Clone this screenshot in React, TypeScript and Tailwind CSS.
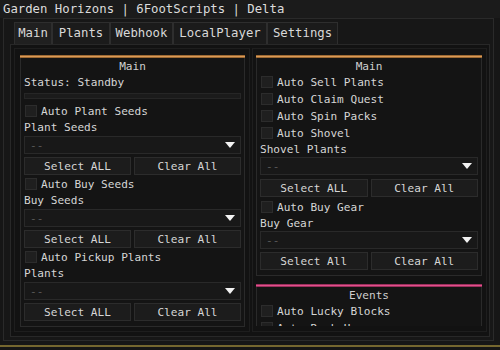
import React from "react";

const tabs = [
  { name: "Main", w: "w-[38px]" },
  { name: "Plants", w: "w-[58px]" },
  { name: "Webhook", w: "w-[63px]" },
  { name: "LocalPlayer", w: "w-[94px]" },
  { name: "Settings", w: "w-[71px]" },
];

function Check({ label, tall = false }: { label: string; tall?: boolean }) {
  return (
    <div className={`flex items-center gap-[4px] pl-[1px] shrink-0 ${tall ? "h-[17px]" : "h-[16px]"}`}>
      <span className="w-[12px] h-[12px] bg-[#1f1f1f] border border-[#2c2c2c] shrink-0" />
      <span className="translate-y-[1px]">{label}</span>
    </div>
  );
}

function Label({ text }: { text: string }) {
  return (
    <div className="h-[16px] flex items-center shrink-0">
      <span className="translate-y-[1px]">{text}</span>
    </div>
  );
}

function Dropdown({ className = "" }: { className?: string }) {
  return (
    <div
      className={`h-[18px] shrink-0 flex items-center justify-between pl-[5px] pr-[5px] bg-[#181818] border border-[#292929] ${className}`}
    >
      <span className="text-[#5a5a5a] translate-y-[1px]">--</span>
      <svg width="10" height="6" viewBox="0 0 10 6">
        <polygon points="0,0 10,0 5,6" fill="#f2f2f2" />
      </svg>
    </div>
  );
}

function Buttons({ first = "Select ALL", className = "" }: { first?: string; className?: string }) {
  return (
    <div className={`grid grid-cols-2 gap-[3px] h-[18px] shrink-0 ${className}`}>
      <div className="flex items-center justify-center bg-[#1c1c1c] border border-[#2c2c2c]">
        <span className="translate-y-[1px]">{first}</span>
      </div>
      <div className="flex items-center justify-center bg-[#1c1c1c] border border-[#2c2c2c]">
        <span className="translate-y-[1px]">Clear All</span>
      </div>
    </div>
  );
}

function Panel({
  title,
  accent = "orange",
  children,
  className = "",
}: {
  title: string;
  accent?: "orange" | "pink";
  children: React.ReactNode;
  className?: string;
}) {
  return (
    <div className={`flex flex-col shrink-0 ${className}`}>
      {accent === "orange" ? (
        <div className="h-[3px] bg-gradient-to-b from-[#7e5223] via-[#dc9a56] to-[#7e5223]" />
      ) : (
        <div className="h-[3px] bg-gradient-to-b from-[#7a2146] via-[#e2508c] to-[#7a2146]" />
      )}
      <div className="flex flex-col border-x border-b border-[#2a2a2a] bg-[#141414] px-[3px] pb-[5px]">
        <div className="h-[15px] flex items-center justify-center text-[#cfcfcf]">
          <span className="translate-y-[1px]">{title}</span>
        </div>
        {children}
      </div>
    </div>
  );
}

export default function App() {
  return (
    <div className="w-[500px] h-[350px] overflow-hidden bg-[#161616] text-[#d6d6d6] font-['DejaVu_Sans_Mono',monospace] text-[11.1px] leading-none">
      {/* ── Title bar ───────────────────────────────────────────── */}
      <div className="h-[18px] flex items-center pl-[3px] bg-[#1b1b1b] text-[12.3px] text-[#dcdcdc]">
        Garden Horizons | 6FootScripts | Delta
      </div>

      {/* ── Window frame ────────────────────────────────────────── */}
      <div className="ml-[3px] w-[491px] h-[323px] border border-[#2a2a2a] bg-[#171717] pl-[6px] flex flex-col">
        {/* Tabs */}
        <div className="flex ml-[4px] mt-[3px] h-[22px] text-[12.3px]">
          {tabs.map((t) => (
            <div
              key={t.name}
              className={`${t.w} flex items-center justify-center border border-b-0 border-[#2e2e2e] ${
                t.name === "Main" ? "bg-[#202020]" : "bg-[#1b1b1b]"
              } text-[#d8d8d8]`}
            >
              {t.name}
            </div>
          ))}
        </div>

        {/* Content box */}
        <div className="w-[480px] h-[293px] border border-[#282828] bg-[#121212] flex gap-[2px] pt-[3px] pl-[3px]">
          {/* Left child */}
          <div className="w-[236px] h-[284px] border border-[#1e1e1e] pt-[6px] pl-[5px]">
            <Panel title="Main" className="w-[225px]">
              <div className="h-[18px] flex items-center shrink-0">
                <span className="translate-y-[1px]">Status: Standby</span>
              </div>
              <div className="mt-[2px] h-[6px] bg-[#1b1b1b] border border-[#262626] shrink-0" />
              <div className="mt-[4px]" />
              <Check label="Auto Plant Seeds" />
              <Label text="Plant Seeds" />
              <Dropdown className="mt-[1px]" />
              <Buttons className="mt-[3px]" />
              <div className="mt-[1px]" />
              <Check label="Auto Buy Seeds" />
              <Label text="Buy Seeds" />
              <Dropdown className="mt-[1px]" />
              <Buttons className="mt-[3px]" />
              <div className="mt-[1px]" />
              <Check label="Auto Pickup Plants" />
              <Label text="Plants" />
              <Dropdown className="mt-[1px]" />
              <Buttons className="mt-[3px]" />
            </Panel>
          </div>

          {/* Right child */}
          <div className="w-[235px] h-[284px] border border-[#1e1e1e] pt-[6px] pl-[3px]">
            <div className="h-[271px] overflow-hidden flex flex-col">
              <Panel title="Main" className="w-[226px]">
                <Check label="Auto Sell Plants" tall />
                <Check label="Auto Claim Quest" tall />
                <Check label="Auto Spin Packs" tall />
                <Check label="Auto Shovel" tall />
                <Label text="Shovel Plants" />
                <Dropdown />
                <Buttons className="mt-[4px]" />
                <div className="mt-[1px]" />
                <Check label="Auto Buy Gear" tall />
                <Label text="Buy Gear" />
                <Dropdown />
                <Buttons first="Select All" className="mt-[3px]" />
              </Panel>
              <Panel title="Events" accent="pink" className="w-[226px] mt-[8px]">
                <Check label="Auto Lucky Blocks" tall />
                <Check label="Auto Rank Up" tall />
                <Check label="Auto Open Eggs" tall />
              </Panel>
            </div>
          </div>
        </div>
      </div>

      <div className="mt-[4px] h-[2px] bg-[#75672f]" />
    </div>
  );
}
